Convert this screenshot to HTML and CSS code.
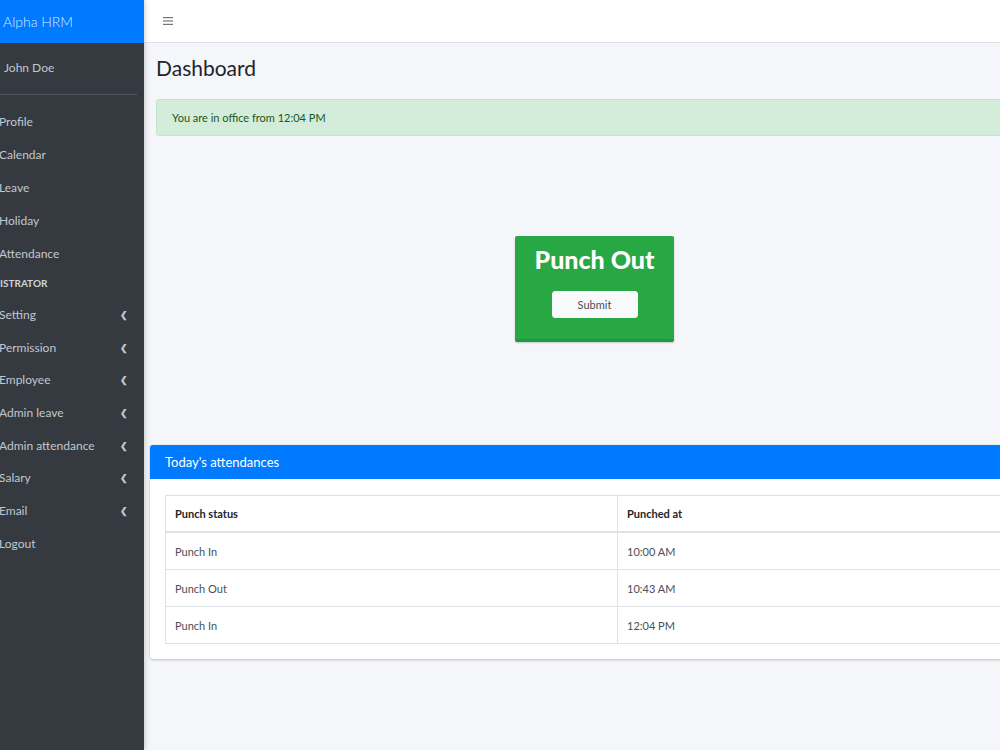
FILE: index.html
```html
<!DOCTYPE html>
<html>
<head>
<meta charset="utf-8">
<title>Alpha HRM</title>
<link rel="stylesheet" href="styles.css">
</head>
<body>
<div class="app">
  <aside class="sidebar">
    <div class="brand">Alpha HRM</div>
    <div class="user-panel">John Doe</div>
    <nav class="menu">
      <div class="item">Profile</div>
      <div class="item">Calendar</div>
      <div class="item">Leave</div>
      <div class="item">Holiday</div>
      <div class="item">Attendance</div>
      <div class="menu-header">ISTRATOR</div>
      <div class="item sub"><span>Setting</span><span class="chev">&#10094;</span></div>
      <div class="item sub"><span>Permission</span><span class="chev">&#10094;</span></div>
      <div class="item sub"><span>Employee</span><span class="chev">&#10094;</span></div>
      <div class="item sub"><span>Admin leave</span><span class="chev">&#10094;</span></div>
      <div class="item sub"><span>Admin attendance</span><span class="chev">&#10094;</span></div>
      <div class="item sub"><span>Salary</span><span class="chev">&#10094;</span></div>
      <div class="item sub"><span>Email</span><span class="chev">&#10094;</span></div>
      <div class="item sub">Logout</div>
    </nav>
  </aside>
  <div class="main">
    <div class="main-inner">
      <header class="topbar">
        <svg class="burger" width="10" height="8" viewBox="0 0 10 8"><rect x="0" y="0" width="10" height="1.2" fill="#6c757d"/><rect x="0" y="3.4" width="10" height="1.2" fill="#6c757d"/><rect x="0" y="6.8" width="10" height="1.2" fill="#6c757d"/></svg>
      </header>
      <section class="content">
        <h1 class="title">Dashboard</h1>
        <div class="alert">You are in office from 12:04 PM</div>
        <div class="punch-wrap">
          <div class="punch">
            <div class="punch-title">Punch Out</div>
            <button class="submit">Submit</button>
          </div>
        </div>
        <div class="card">
          <div class="card-header">Today's attendances</div>
          <div class="card-body">
            <table class="table">
              <thead>
                <tr><th class="c1">Punch status</th><th>Punched at</th></tr>
              </thead>
              <tbody>
                <tr><td>Punch In</td><td>10:00 AM</td></tr>
                <tr><td>Punch Out</td><td>10:43 AM</td></tr>
                <tr><td>Punch In</td><td>12:04 PM</td></tr>
              </tbody>
            </table>
          </div>
        </div>
      </section>
    </div>
  </div>
</div>
</body>
</html>
```
FILE: styles.css
```css
html, body {
  margin: 0;
  padding: 0;
  overflow: hidden;
  width: 1000px;
  height: 750px;
  background: #f4f6f9;
}
body {
  font-family: "Lato", "Liberation Sans", sans-serif;
  color: #212529;
}
.app {
  display: flex;
  width: 1000px;
  height: 750px;
  overflow: hidden;
}
.sidebar {
  width: 144px;
  flex: 0 0 144px;
  background: #343a40;
  box-shadow: 0 0 6px rgba(0,0,0,.25);
  position: relative;
  z-index: 2;
  min-height: 750px;
}
.brand {
  height: 43px;
  background: #007bff;
  color: rgba(255,255,255,.85);
  font-size: 14px;
  font-weight: 300;
  line-height: 43px;
  padding-left: 3px;
  box-sizing: border-box;
}
.user-panel {
  height: 51px;
  line-height: 50px;
  color: #c2c7d0;
  font-size: 12px;
  padding-left: 4px;
  margin-right: 7px;
  border-bottom: 1px solid #4f5962;
}
.menu {
  padding-top: 10px;
}
.item {
  height: 33px;
  display: flex;
  align-items: center;
  justify-content: space-between;
  color: #c2c7d0;
  font-size: 12px;
  margin-left: -1px;
  padding-right: 16px;
}
.item.sub {
  height: 32.7px;
}
.chev {
  font-size: 9px;
  font-weight: 700;
  color: #c2c7d0;
}
.menu-header {
  height: 28px;
  line-height: 27px;
  color: #d0d4db;
  font-size: 10px;
  font-weight: 700;
}
.main {
  flex: 1;
  min-width: 0;
  overflow: hidden;
}
.main-inner {
  width: 901px;
  display: flex;
  flex-direction: column;
}
.topbar {
  height: 42px;
  background: #fff;
  border-bottom: 1px solid #dee2e6;
  display: flex;
  align-items: center;
  padding-left: 19px;
}
.burger {
  display: block;
}
.content {
  padding: 0 12px 0 12px;
}
.title {
  margin: 11px 0 0 0;
  font-size: 21px;
  font-weight: 400;
  line-height: 28px;
  height: 28px;
  color: #212529;
}
.alert {
  margin-top: 17px;
  height: 37px;
  box-sizing: border-box;
  background: #d4edda;
  border: 1px solid #c3e6cb;
  border-radius: 3px;
  color: #155724;
  font-size: 11px;
  line-height: 35px;
  padding-left: 15px;
}
.punch-wrap {
  display: flex;
  justify-content: center;
  padding-top: 100px;
}
.punch {
  width: 159px;
  height: 106px;
  box-sizing: border-box;
  background: #28a745;
  border-radius: 2px;
  border-bottom: 3px solid #23963e;
  box-shadow: 0 1px 2px rgba(0,0,0,.2);
  display: flex;
  flex-direction: column;
  align-items: center;
}
.punch-title {
  color: #fff;
  font-size: 25px;
  font-weight: 900;
  margin-top: 7px;
  line-height: 32px;
}
.submit {
  margin-top: 16px;
  width: 86px;
  height: 27px;
  background: #f8f9fa;
  border: 1px solid #f8f9fa;
  border-radius: 3px;
  color: #495057;
  font-family: inherit;
  font-size: 11px;
  padding: 0;
}
.card {
  margin: 103px -6px 0 -6px;
  background: #fff;
  border-radius: 3px;
  box-shadow: 0 0 1px rgba(0,0,0,.2), 0 1px 3px rgba(0,0,0,.2);
}
.card-header {
  height: 34px;
  background: #007bff;
  color: #fff;
  font-size: 13px;
  line-height: 34px;
  padding-left: 15px;
  border-radius: 3px 3px 0 0;
}
.card-body {
  padding: 16px 15px 15px 15px;
}
.table {
  width: 100%;
  border-collapse: collapse;
  font-size: 11px;
  color: #212529;
}
.table th, .table td {
  border: 1px solid #dee2e6;
  height: 36px;
  padding: 0 9px;
  text-align: left;
}
.table th {
  font-weight: 700;
  height: 35px;
  border-bottom-width: 2px;
}
.table td {
  color: #495057;
}
.table .c1 {
  width: 433px;
}
```
